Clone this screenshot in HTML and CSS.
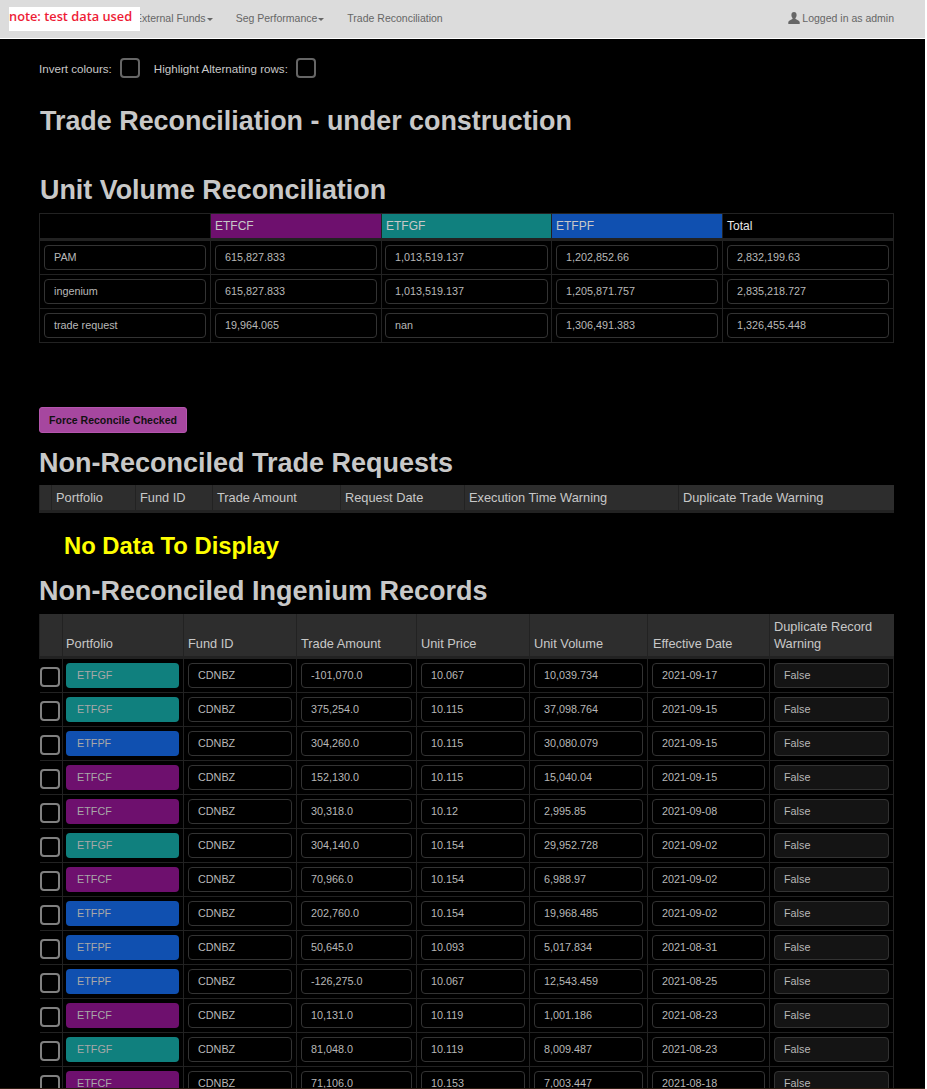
FILE: index.html
```html
<!DOCTYPE html>
<html lang="en">
<head>
    <meta charset="UTF-8">
    <meta name="viewport" content="width=device-width, initial-scale=1.0">
    <title>Trade Reconciliation</title>
    <link rel="stylesheet" href="styles.css">
</head>
<body>
    <nav class="navbar">
        <div class="nav-links">
            <span class="nav-link">External Funds<i class="caret"></i></span>
            <span class="nav-link">Seg Performance<i class="caret"></i></span>
            <span class="nav-link">Trade Reconciliation</span>
        </div>
        <div class="nav-user">
            <svg class="user-icon" viewBox="0 0 12 12" width="12" height="12"><path d="M6 0C4.3 0 3.4 1.200 3.400 3c0 1.200.5 2.300 1.100 3 .2.300.2.800-.1 1.100C3.500 7.900.6 8.400.3 10v2h11.400v-2c-.3-1.600-3.200-2.100-4.100-2.900-.3-.3-.3-.8-.1-1.100.6-.7 1.100-1.800 1.100-3C8.600 1.200 7.700 0 6 0z"/></svg>
            Logged in as admin
        </div>
        <div class="note">note: test data used</div>
    </nav>

    <main class="content">
        <div class="options">
            <span>Invert colours:</span><span class="check check-opt"></span>
            <span class="opt-second">Highlight Alternating rows:</span><span class="check check-opt"></span>
        </div>

        <h1 class="page-title">Trade Reconciliation - under construction</h1>

        <h2 class="first-heading">Unit Volume Reconciliation</h2>
        <table class="volume">
            <colgroup>
                <col class="v1"><col class="v2"><col class="v3"><col class="v4"><col class="v5">
            </colgroup>
            <thead>
                <tr>
                    <th></th>
                    <th class="etfcf">ETFCF</th>
                    <th class="etfgf">ETFGF</th>
                    <th class="etfpf">ETFPF</th>
                    <th class="total">Total</th>
                </tr>
            </thead>
            <tbody>
                <tr>
                    <td><div class="box">PAM</div></td>
                    <td><div class="box">615,827.833</div></td>
                    <td><div class="box">1,013,519.137</div></td>
                    <td><div class="box">1,202,852.66</div></td>
                    <td><div class="box">2,832,199.63</div></td>
                </tr>
                <tr>
                    <td><div class="box">ingenium</div></td>
                    <td><div class="box">615,827.833</div></td>
                    <td><div class="box">1,013,519.137</div></td>
                    <td><div class="box">1,205,871.757</div></td>
                    <td><div class="box">2,835,218.727</div></td>
                </tr>
                <tr>
                    <td><div class="box">trade request</div></td>
                    <td><div class="box">19,964.065</div></td>
                    <td><div class="box">nan</div></td>
                    <td><div class="box">1,306,491.383</div></td>
                    <td><div class="box">1,326,455.448</div></td>
                </tr>
            </tbody>
        </table>

        <button class="force-btn" type="button">Force Reconcile Checked</button>

        <h2 class="requests-heading">Non-Reconciled Trade Requests</h2>
        <table class="grid requests">
            <colgroup>
                <col class="r0"><col class="r1"><col class="r2"><col class="r3"><col class="r4"><col class="r5"><col class="r6">
            </colgroup>
            <thead>
                <tr>
                    <th></th>
                    <th>Portfolio</th>
                    <th>Fund ID</th>
                    <th>Trade Amount</th>
                    <th>Request Date</th>
                    <th>Execution Time Warning</th>
                    <th>Duplicate Trade Warning</th>
                </tr>
            </thead>
        </table>
        <p class="no-data">No Data To Display</p>

        <h2 class="records-heading">Non-Reconciled Ingenium Records</h2>
        <table class="grid records">
            <colgroup>
                <col class="g0"><col class="g1"><col class="g2"><col class="g3"><col class="g4"><col class="g5"><col class="g6"><col class="g7">
            </colgroup>
            <thead>
                <tr>
                    <th></th>
                    <th>Portfolio</th>
                    <th>Fund ID</th>
                    <th>Trade Amount</th>
                    <th>Unit Price</th>
                    <th>Unit Volume</th>
                    <th>Effective Date</th>
                    <th>Duplicate Record Warning</th>
                </tr>
            </thead>
            <tbody id="records"></tbody>
        </table>
    </main>

    <script src="records.js"></script>
</body>
</html>
```

FILE: styles.css
```css
html {
    background: #fff;
}
body {
    width: 925px;
    height: 1088px;
    margin: 0;
    overflow: hidden;
    background: #000;
    border-bottom: 1px solid #2a1c12;
    color: #c8c8c8;
    font-family: "Liberation Sans", Arial, sans-serif;
    font-size: 11px;
}

/* navbar */
.navbar {
    position: relative;
    display: flex;
    justify-content: space-between;
    align-items: center;
    height: 36px;
    padding: 0 31px 2px 135px;
    background: #dcdcdc;
    border-bottom: 1px solid #fff;
    color: #666;
    font-size: 10.5px;
}
.nav-links {
    display: flex;
}
.nav-link {
    margin-right: 23px;
}
.caret {
    display: inline-block;
    margin-left: 1px;
    vertical-align: middle;
    border-top: 3px solid #666;
    border-left: 3px solid transparent;
    border-right: 3px solid transparent;
}
.nav-user {
    display: flex;
    align-items: center;
    gap: 2px;
}
.user-icon {
    fill: #666;
}
.note {
    position: absolute;
    left: 9px;
    top: 7px;
    width: 131px;
    height: 24px;
    box-sizing: border-box;
    background: #fff;
    color: #ee1c36;
    font-family: "Open Sans", sans-serif;
    font-size: 12.8px;
    font-weight: 600;
    line-height: 18px;
    white-space: nowrap;
}

/* page */
.content {
    padding: 18px 31px 0 39px;
}
.options {
    display: flex;
    align-items: center;
    height: 22px;
    font-size: 11.6px;
}
.opt-second {
    margin-left: 14px;
}
.check {
    display: block;
    box-sizing: border-box;
    width: 20px;
    height: 20px;
    border: 2px solid #808080;
    border-radius: 4px;
}
.check-opt {
    margin-left: 8px;
    border-color: #666;
}
h1, h2 {
    margin: 0;
    color: #c8c8c8;
    font-weight: bold;
}
.page-title {
    margin: 27px 0 0 1px;
    font-size: 26.9px;
    line-height: 31px;
}
.first-heading {
    margin: 38px 0 0 1px;
    font-size: 26.9px;
    line-height: 31px;
}
.requests-heading, .records-heading {
    font-size: 27px;
    line-height: 31px;
}
.requests-heading {
    margin-top: 15px;
}
.records-heading {
    margin-top: 17px;
}

/* tables */
table {
    width: 854px;
    table-layout: fixed;
    border-collapse: collapse;
}
.volume {
    margin-top: 7px;
    border: 1px solid #222;
}
.volume th {
    height: 24px;
    padding: 0 4px;
    border: 1px solid #222;
    border-bottom-width: 3px;
    font-size: 12px;
    font-weight: normal;
    text-align: left;
}
.volume td {
    padding: 4px;
    border: 1px solid #222;
}
.volume td:nth-child(3) {
    padding: 4px 3px;
}
.v1 { width: 171px; }
.v2 { width: 171px; }
.v3 { width: 170px; }
.v4 { width: 171px; }
.v5 { width: 171px; }
.etfcf { background: #6e106e; }
.etfgf { background: #10807e; }
.etfpf { background: #1050b0; }
.volume .total { color: #e8e8e8; }
.box {
    box-sizing: border-box;
    height: 25px;
    padding: 0 9px;
    border: 1px solid #333;
    border-radius: 4px;
    color: #b8b8b8;
    font-size: 10.8px;
    line-height: 23px;
    white-space: nowrap;
}
.force-btn {
    display: block;
    width: 148px;
    height: 26px;
    margin-top: 64px;
    padding: 0;
    background: #a6479f;
    border: 1px solid #b455ad;
    border-radius: 3px;
    color: #111;
    font-family: inherit;
    font-size: 10.5px;
    font-weight: bold;
}
.grid {
    margin-top: 7px;
}
.grid th {
    padding: 0 4px 4px;
    background: #2d2d2d;
    border-left: 1px solid #222;
    border-bottom: 3px solid #222;
    color: #c8c8c8;
    font-size: 12.8px;
    font-weight: normal;
    line-height: 17px;
    text-align: left;
    vertical-align: bottom;
}
.requests {
    margin-top: 6px;
}
.requests th {
    height: 25px;
    padding: 0 4px;
    vertical-align: middle;
}
.records th {
    height: 38px;
}
.records th:nth-child(2) {
    padding-left: 3px;
}
.records th:nth-child(7) {
    padding-left: 5px;
}
.r0 { width: 12px; }
.r1 { width: 84px; }
.r2 { width: 77px; }
.r3 { width: 128px; }
.r4 { width: 124px; }
.r5 { width: 214px; }
.r6 { width: 215px; }
.no-data {
    margin: 19px 0 0 25px;
    color: #ff0;
    font-size: 23.8px;
    font-weight: bold;
    line-height: 27px;
}
.g0 { width: 23px; }
.g1 { width: 121px; }
.g2 { width: 113px; }
.g3 { width: 120px; }
.g4 { width: 113px; }
.g5 { width: 118px; }
.g6 { width: 122px; }
.g7 { width: 124px; }
.records td {
    height: 33px;
    padding: 4px;
    border: 1px solid #222;
    box-sizing: border-box;
}
.records td:first-child {
    padding: 0;
    border-left: 0;
}
.records td:nth-child(2) {
    padding-left: 3px;
}
.records .check {
    margin: 2px 0 0;
}
.records .warn {
    background: #141414;
}
.records .etfcf, .records .etfgf, .records .etfpf {
    padding-left: 10px;
    color: #a8a8a8;
    border-color: transparent;
}
.box.etfcf { background: #6e106e; }
.box.etfgf { background: #10807e; }
.box.etfpf { background: #1050b0; }
```

FILE: records.js
```js
// rows of the ingenium table
var rows = [
    ['ETFGF', '-101,070.0', '10.067', '10,039.734', '2021-09-17'],
    ['ETFGF', '375,254.0', '10.115', '37,098.764', '2021-09-15'],
    ['ETFPF', '304,260.0', '10.115', '30,080.079', '2021-09-15'],
    ['ETFCF', '152,130.0', '10.115', '15,040.04', '2021-09-15'],
    ['ETFCF', '30,318.0', '10.12', '2,995.85', '2021-09-08'],
    ['ETFGF', '304,140.0', '10.154', '29,952.728', '2021-09-02'],
    ['ETFCF', '70,966.0', '10.154', '6,988.97', '2021-09-02'],
    ['ETFPF', '202,760.0', '10.154', '19,968.485', '2021-09-02'],
    ['ETFPF', '50,645.0', '10.093', '5,017.834', '2021-08-31'],
    ['ETFPF', '-126,275.0', '10.067', '12,543.459', '2021-08-25'],
    ['ETFCF', '10,131.0', '10.119', '1,001.186', '2021-08-23'],
    ['ETFGF', '81,048.0', '10.119', '8,009.487', '2021-08-23'],
    ['ETFCF', '71,106.0', '10.153', '7,003.447', '2021-08-18']
];

var html = '';
rows.forEach(function (r) {
    html += '<tr><td><span class="check"></span></td>'
        + '<td><div class="box ' + r[0].toLowerCase() + '">' + r[0] + '</div></td>'
        + '<td><div class="box">CDNBZ</div></td>'
        + '<td><div class="box">' + r[1] + '</div></td>'
        + '<td><div class="box">' + r[2] + '</div></td>'
        + '<td><div class="box">' + r[3] + '</div></td>'
        + '<td><div class="box">' + r[4] + '</div></td>'
        + '<td><div class="box warn">False</div></td></tr>';
});
document.getElementById('records').innerHTML = html;
```
